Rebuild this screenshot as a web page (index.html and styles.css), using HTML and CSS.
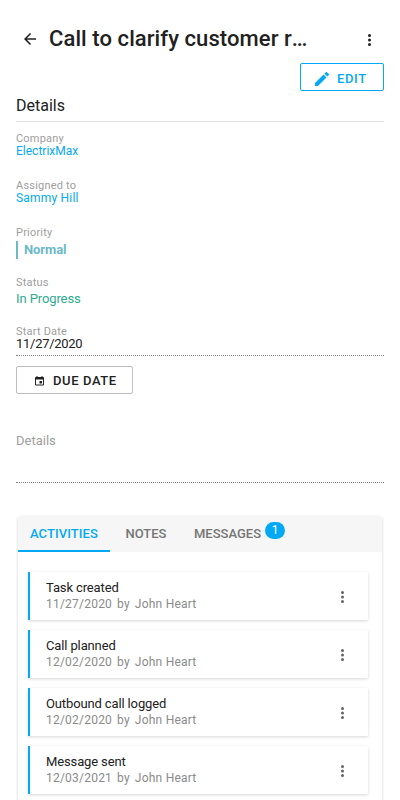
FILE: index.html
```html
<!DOCTYPE html>
<html lang="en">
<head>
<meta charset="utf-8">
<title>Task details</title>
<link rel="stylesheet" href="styles.css">
</head>
<body>
<main class="page">
  <header class="toolbar">
    <svg class="back" viewBox="0 0 12 12"><path d="M12 5.25H2.9L7.1 1.05 6 0 0 6l6 6 1.05-1.05L2.9 6.75H12z"/></svg>
    <h1 class="title">Call to clarify customer request</h1>
    <svg class="dots" viewBox="0 0 3 12"><circle cx="1.5" cy="1.5" r="1.5"/><circle cx="1.5" cy="6" r="1.5"/><circle cx="1.5" cy="10.5" r="1.5"/></svg>
  </header>
  <div class="actions">
    <button class="button edit"><svg class="pencil" viewBox="3 3 18 18"><path d="M3 17.25V21h3.75L17.81 9.94l-3.75-3.75L3 17.25zM20.71 7.04a1 1 0 0 0 0-1.41l-2.34-2.34a1 1 0 0 0-1.41 0l-1.83 1.83 3.75 3.75 1.83-1.83z"/></svg><span>EDIT</span></button>
  </div>
  <h2 class="section">Details</h2>
  <div class="field company"><div class="label">Company</div><div class="value link">ElectrixMax</div></div>
  <div class="field assigned"><div class="label">Assigned to</div><div class="value link person">Sammy Hill</div></div>
  <div class="field priority"><div class="label">Priority</div><div class="value normal">Normal</div></div>
  <div class="field status"><div class="label">Status</div><div class="value progress">In Progress</div></div>
  <div class="field start"><div class="label">Start Date</div><div class="value date">11/27/2020</div></div>
  <button class="button due"><svg class="calendar" viewBox="3 2 18 20"><path d="M17 12h-5v5h5v-5zM16 2v2H8V2H6v2H5a2 2 0 0 0-2 2v13a2 2 0 0 0 2 2h14a2 2 0 0 0 2-2V6a2 2 0 0 0-2-2h-1V2h-2zm3 17H5V9h14v10z"/></svg><span>DUE DATE</span></button>
  <div class="notes">Details</div>
  <section class="panel">
    <nav class="tabs">
      <div class="tab active">ACTIVITIES</div>
      <div class="tab">NOTES</div>
      <div class="tab">MESSAGES<span class="badge">1</span></div>
    </nav>
    <div class="list">
      <article class="item"><div><div class="name">Task created</div><div class="meta"><span>11/27/2020</span><span>by</span><span>John Heart</span></div></div><svg class="dots" viewBox="0 0 3 12"><circle cx="1.5" cy="1.5" r="1.5"/><circle cx="1.5" cy="6" r="1.5"/><circle cx="1.5" cy="10.5" r="1.5"/></svg></article>
      <article class="item"><div><div class="name">Call planned</div><div class="meta"><span>12/02/2020</span><span>by</span><span>John Heart</span></div></div><svg class="dots" viewBox="0 0 3 12"><circle cx="1.5" cy="1.5" r="1.5"/><circle cx="1.5" cy="6" r="1.5"/><circle cx="1.5" cy="10.5" r="1.5"/></svg></article>
      <article class="item"><div><div class="name">Outbound call logged</div><div class="meta"><span>12/02/2020</span><span>by</span><span>John Heart</span></div></div><svg class="dots" viewBox="0 0 3 12"><circle cx="1.5" cy="1.5" r="1.5"/><circle cx="1.5" cy="6" r="1.5"/><circle cx="1.5" cy="10.5" r="1.5"/></svg></article>
      <article class="item"><div><div class="name">Message sent</div><div class="meta"><span>12/03/2021</span><span>by</span><span>John Heart</span></div></div><svg class="dots" viewBox="0 0 3 12"><circle cx="1.5" cy="1.5" r="1.5"/><circle cx="1.5" cy="6" r="1.5"/><circle cx="1.5" cy="10.5" r="1.5"/></svg></article>
    </div>
  </section>
</main>
</body>
</html>
```
FILE: styles.css
```css
* { box-sizing: border-box; }
body { margin: 0; background: #fff; color: #212121; font-family: Roboto, sans-serif; font-size: 13px; }
svg { display: block; fill: currentColor; flex: none; }
.page { height: 800px; overflow: hidden; padding: 23px 16px 0; }
.toolbar { display: flex; align-items: center; height: 32px; padding-left: 8px; }
.back { width: 12px; height: 12px; margin: 0 13px 0 0; }
.title { width: 263px; margin: 0; font-size: 22px; line-height: 32px; font-weight: 500; letter-spacing: 0.08px; white-space: nowrap; overflow: hidden; text-overflow: ellipsis; }
.dots { width: 3px; height: 12px; }
.toolbar .dots { margin: 2px 13px 0 auto; }
.actions { display: flex; justify-content: flex-end; padding-top: 8px; }
.button { display: flex; align-items: center; height: 28px; padding: 0; background: #fff; border: 1px solid; border-radius: 2px; font: 500 13px/16px Roboto, sans-serif; letter-spacing: 0.6px; }
.edit { width: 84px; padding: 3px 0 0 14px; color: #03a9f4; }
.pencil { width: 14px; height: 14px; margin-right: 8px; }
.section { height: 31px; margin: 0; padding-top: 4px; border-bottom: 1px solid #e0e0e0; font-size: 16px; line-height: 21px; font-weight: 400; }
.label { padding-top: 1px; font-size: 11px; line-height: 11px; letter-spacing: 0.2px; color: #9e9e9e; }
.value { font-size: 12px; line-height: 14px; }
.field { height: 47px; }
.company { margin-top: 10px; }
.link { color: #03a9f4; }
.person { letter-spacing: 0.2px; }
.priority { height: 50px; }
.normal { margin-top: 3px; padding-left: 6px; border-left: 2px solid #6cb9c9; color: #6cb9c9; font-size: 13px; line-height: 18px; font-weight: 700; letter-spacing: -0.1px; }
.status { height: 49px; }
.progress { margin-top: 3px; font-size: 13px; line-height: 16px; letter-spacing: -0.1px; color: #2eab90; }
.start { height: 31px; border-bottom: 1px dotted #858585; }
.date { font-size: 13px; line-height: 14px; letter-spacing: -0.28px; }
.due { width: 117px; margin-top: 10px; padding: 2px 0 0 18px; border-color: #bdbdbd; color: #212121; }
.calendar { width: 9px; height: 10px; margin: -1px 9px 0 0; }
.notes { height: 51px; margin-top: 38px; border-bottom: 1px dotted #858585; color: #9e9e9e; line-height: 18px; }
.panel { width: 364px; height: 340px; margin: 33px 0 0 2px; border-radius: 3px; box-shadow: 0 1px 3px rgba(0,0,0,.2); }
.tabs { display: flex; height: 36px; background: #f6f6f6; border-radius: 3px 3px 0 0; }
.tab { display: flex; justify-content: center; min-width: 72px; height: 36px; padding: 0 12px; font-weight: 500; line-height: 36px; color: #757575; }
.active { width: 92px; letter-spacing: 0.08px; color: #03a9f4; border-bottom: 2px solid; }
.badge { width: 20px; height: 17px; margin: 6px 0 0 4px; border-radius: 9px; background: #03a9f4; color: #fff; text-align: center; font-size: 12px; line-height: 17px; font-weight: 400; }
.list { display: flex; flex-direction: column; gap: 10px; padding: 20px 14px 0 10px; }
.item { display: flex; align-items: center; justify-content: space-between; height: 48px; padding: 0 24px 0 16px; border-left: 2px solid #03a9f4; box-shadow: 0 1px 3px rgba(0,0,0,.16); }
.item .dots { color: #666; margin-top: 2px; }
.name { font-size: 13px; line-height: 16px; letter-spacing: -0.13px; }
.meta { display: flex; gap: 5px; color: #8a8a8a; font-size: 12px; line-height: 16px; letter-spacing: 0.22px; }
```
